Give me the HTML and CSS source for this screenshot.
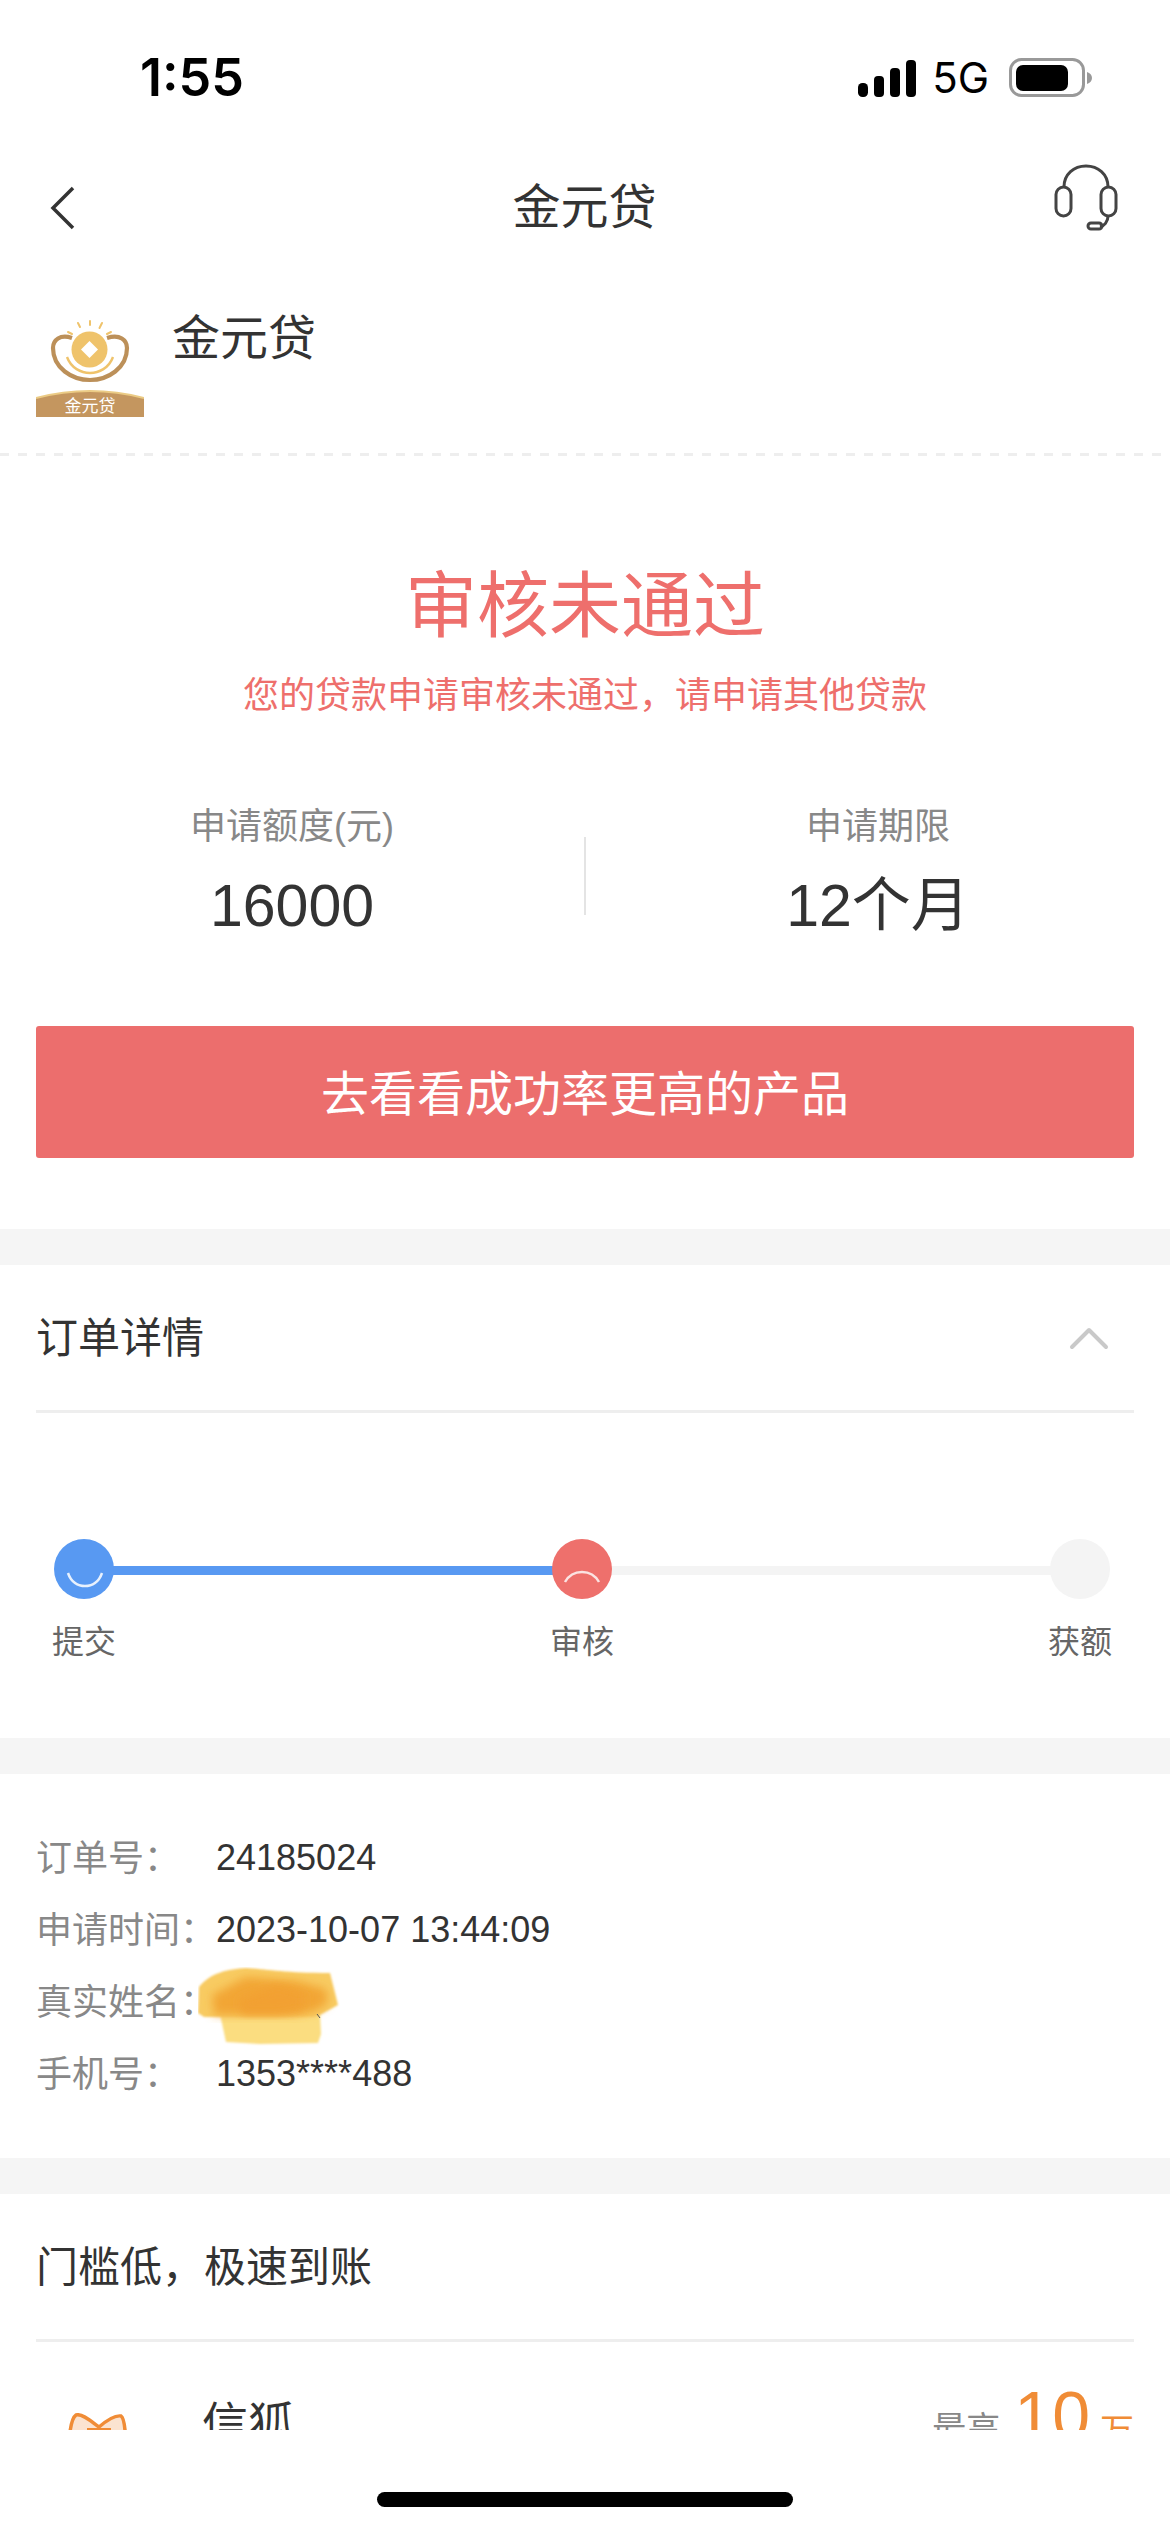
FILE: index.html
```html
<!DOCTYPE html>
<html lang="zh-CN">
<head>
<meta charset="utf-8">
<title>金元贷</title>
<link rel="stylesheet" href="styles.css">
</head>
<body>
<div class="viewport">
  <header class="statusbar">
    <span class="time">1:55</span>
    <div class="status-right">
      <svg class="signal" width="58" height="37" viewBox="0 0 58 37"><rect x="0" y="23" width="10" height="14" rx="4.5"/><rect x="16" y="16" width="10" height="21" rx="4"/><rect x="32" y="8" width="10" height="29" rx="4"/><rect x="48" y="0" width="10" height="37" rx="4"/></svg>
      <span class="net">5G</span>
      <svg class="battery" width="84" height="40" viewBox="0 0 84 40"><rect x="1.5" y="1.5" width="73" height="36" rx="11" fill="none" stroke="#999" stroke-width="3"/><rect x="7" y="7" width="52" height="26" rx="7" fill="#000"/><path d="M78 14c3 1 5 3 5 6s-2 5-5 6z" fill="#999"/></svg>
    </div>
  </header>

  <nav class="nav">
    <svg class="back" width="26" height="44" viewBox="0 0 26 44"><path d="M23 2 3 22l20 20" fill="none" stroke="#333" stroke-width="3.5"/></svg>
    <h1 class="nav-title">金元贷</h1>
    <svg class="headset" width="66" height="68" viewBox="0 0 66 68" fill="none" stroke="#444" stroke-width="3"><path d="M11 24C11 11 21 3 33 3s22 8 22 21"/><rect x="3" y="24" width="15" height="29" rx="7.5"/><rect x="48" y="24" width="15" height="29" rx="7.5"/><path d="M55 53c0 6-4 10-8 11"/><rect x="35" y="60" width="14" height="6" rx="3"/></svg>
  </nav>

  <section class="brand">
    <svg class="logo" width="108" height="108" viewBox="0 0 108 108">
      <g fill="none" stroke="#EFC36B" stroke-width="2" stroke-linecap="round"><path d="M32 22l4 2M42 13l2 4M54 11v4M66 13l-2.500 5M75 22l-4 2"/></g>
      <path d="M36 28C24 24 17 30 17 38c0 20 19 32 37 32s37-12 37-32c0-8-7-14-20-10" fill="none" stroke="#BC9059" stroke-width="4.200"/>
      <path d="M31 47c4 11 14 16 23 16s19-5 23-16" fill="none" stroke="#EFC36B" stroke-width="2.400"/>
      <circle cx="53.500" cy="39.500" r="18" fill="#EFC36B"/>
      <path d="M53.500 31l8.500 8.500-8.500 8.500-8.500-8.500z" fill="#fff"/>
      <path d="M0 88Q54 74 108 88v19H0z" fill="#C4965F"/>
      <path d="M0 88Q54 74 108 88" fill="none" stroke="#EBCB85" stroke-width="2"/>
      <text class="logo-text" x="54" y="102" text-anchor="middle">金元贷</text>
    </svg>
    <span class="brand-name">金元贷</span>
  </section>
  <div class="dashed"></div>

  <section class="hero">
    <h2 class="hero-title">审核未通过</h2>
    <p class="hero-sub">您的贷款申请审核未通过，请申请其他贷款</p>
    <div class="stats">
      <div class="stat">
        <div class="stat-label">申请额度(元)</div>
        <div class="stat-value">16000</div>
      </div>
      <div class="stat-divider"></div>
      <div class="stat">
        <div class="stat-label">申请期限</div>
        <div class="stat-value">12个月</div>
      </div>
    </div>
    <button class="cta">去看看成功率更高的产品</button>
  </section>

  <div class="band"></div>

  <section class="panel-head">
    <span>订单详情</span>
    <svg class="chev" width="40" height="24" viewBox="0 0 40 24"><path d="M3 21 20 4l17 17" fill="none" stroke="#c9c9c9" stroke-width="4" stroke-linecap="round" stroke-linejoin="round"/></svg>
  </section>

  <section class="steps">
    <div class="track"><div class="track-fill"></div></div>
    <div class="step">
      <svg class="dot" width="60" height="60" viewBox="0 0 60 60"><circle cx="30" cy="30" r="30" fill="#5899F2"/><path d="M14 34c3 9 10 13 17 13s14-4 17-13" fill="none" stroke="#E8F1FD" stroke-width="2.500"/></svg>
      <span class="step-label">提交</span>
    </div>
    <div class="step">
      <svg class="dot" width="60" height="60" viewBox="0 0 60 60"><circle cx="30" cy="30" r="30" fill="#EE706C"/><path d="M13 43c4-7 10-10 17-10s13 3 17 10" fill="none" stroke="#FBE3E2" stroke-width="2.500"/></svg>
      <span class="step-label">审核</span>
    </div>
    <div class="step">
      <svg class="dot" width="60" height="60" viewBox="0 0 60 60"><circle cx="30" cy="30" r="30" fill="#f4f4f4"/></svg>
      <span class="step-label">获额</span>
    </div>
  </section>

  <div class="band"></div>

  <section class="info">
    <div class="row"><span class="row-label">订单号：</span><span class="row-value">24185024</span></div>
    <div class="row"><span class="row-label">申请时间：</span><span class="row-value">2023-10-07 13:44:09</span></div>
    <div class="row">
      <span class="row-label">真实姓名：</span>
      <svg class="scribble" width="150" height="80" viewBox="0 0 150 80">
        <defs>
          <filter id="soft" x="-10%" y="-10%" width="120%" height="120%"><feGaussianBlur stdDeviation="1.200"/></filter>
          <filter id="softer" x="-20%" y="-20%" width="140%" height="140%"><feGaussianBlur stdDeviation="5"/></filter>
        </defs>
        <g filter="url(#soft)">
          <path d="M22 47h100l1 20-3 9-58 1-34-2z" fill="#FBDD80"/>
          <path d="M1 20C12 6 30 2 48 1c20 1 36 5 84 5l8 32-18 10-6 2H6L0 46z" fill="#F8CB62"/>
        </g>
        <path d="M14 28 48 10l50 4 30 8 2 14-12 8-20 4H16z" fill="#F2A635" filter="url(#softer)"/>
        <path d="M40 32 80 18l26 8v16l-24 5H44z" fill="#F2A030" filter="url(#softer)"/>
        <path d="M119 47l3 4" fill="none" stroke="#555" stroke-width="1"/>
      </svg>
    </div>
    <div class="row"><span class="row-label">手机号：</span><span class="row-value">1353****488</span></div>
  </section>

  <div class="band"></div>

  <section class="panel-head"><span>门槛低，极速到账</span></section>

  <section class="item">
    <svg class="fox" width="60" height="50" viewBox="0 0 60 50"><path d="M2 50C1 30 3 6 9 2c6-2 16 7 23 12 7-6 16-12 22-11 5 3 5 30 5 47z" fill="#FBE3D0" stroke="#F08C36" stroke-width="3.500"/><path d="M20 15h24v35H20z" fill="#F08C36"/></svg>
    <span class="item-name">信狐</span>
    <div class="item-amount"><span class="amt-pre">最高</span><span class="amt-num">10</span><span class="amt-unit">万</span></div>
  </section>
</div>
<div class="home"><div class="home-bar"></div></div>
</body>
</html>
```
FILE: styles.css
```css
* { box-sizing: border-box; }
html, body { margin: 0; padding: 0; background: #fff; }
body {
  width: 1170px;
  height: 2532px;
  overflow: hidden;
  font-family: "Liberation Sans", "Noto Sans CJK SC", sans-serif;
  color: #333;
}
h1, h2, p { margin: 0; font-weight: 400; }

.viewport { height: 2430px; overflow: hidden; }

/* status bar */
.statusbar {
  height: 120px;
  padding: 36px 77px 0 140px;
  display: flex;
  align-items: center;
  justify-content: space-between;
}
.time { font-family: Inter, "Liberation Sans", sans-serif; font-weight: 600; font-size: 52px; line-height: 84px; color: #000; }
.status-right { display: flex; align-items: center; }
.signal { fill: #000; margin-right: 16px; }
.net { font-family: Inter, "Liberation Sans", sans-serif; font-size: 42px; line-height: 40px; color: #000; margin-right: 20px; }

/* nav */
.nav {
  height: 172px;
  display: grid;
  grid-template-columns: 1fr auto 1fr;
  align-items: center;
  padding: 0 51px 0 50px;
}
.back { margin-top: 4px; }
.nav-title {
  font-size: 48px;
  line-height: 60px;
  margin-top: 3px;
  color: #333;
}
.headset { justify-self: end; margin-top: -18px; }

/* brand */
.brand {
  height: 161px;
  padding: 18px 36px 0;
  display: flex;
  align-items: flex-start;
  gap: 28px;
}
.logo-text { font-size: 17px; fill: #fff; }
.brand-name { font-size: 48px; line-height: 54px; margin-top: 2px; color: #333; }
.dashed {
  height: 3px;
  background: repeating-linear-gradient(90deg, #eeeeee 0 9px, transparent 9px 18px);
}

/* hero */
.hero { padding: 110px 0 71px; text-align: center; }
.hero-title { font-size: 72px; line-height: 80px; color: #EE6F6C; }
.hero-sub { font-size: 36px; line-height: 50px; color: #EE6F6C; margin-top: 25px; }
.stats { display: flex; margin-top: 81px; }
.stat { flex: 1; }
.stat-label { font-size: 36px; line-height: 50px; color: #888; }
.stat-value { font-size: 59px; line-height: 70px; color: #333; margin-top: 19px; }
.stat-divider { width: 2px; height: 78px; background: #e4e4e4; margin-top: 35px; }
.cta {
  display: block;
  width: 1098px;
  height: 132px;
  margin: 85px 36px 0;
  padding: 0 0 5px;
  border: 0;
  border-radius: 3px;
  background: #EC6E6D;
  color: #fff;
  font-family: inherit;
  font-size: 48px;
}

.band { height: 36px; background: #f5f5f5; }

/* section heading */
.panel-head {
  height: 148px;
  margin: 0 36px;
  padding-bottom: 6px;
  border-bottom: 3px solid #eeeeee;
  display: flex;
  align-items: center;
  justify-content: space-between;
  font-size: 42px;
  color: #333;
}
.chev { margin: 7px 25px 0 0; }

/* steps */
.steps {
  position: relative;
  display: flex;
  justify-content: space-between;
  padding: 126px 58px 76px 52px;
}
.track {
  position: absolute;
  top: 153px;
  left: 84px;
  width: 996px;
  height: 9px;
  background: #f4f4f4;
}
.track-fill { width: 50%; height: 100%; background: #5899F2; }
.step {
  position: relative;
  width: 64px;
  display: flex;
  flex-direction: column;
  align-items: center;
}
.dot { display: block; }
.step-label { font-size: 32px; line-height: 40px; color: #666; margin-top: 23px; white-space: nowrap; }

/* order info */
.info { padding: 48px 36px; }
.row { height: 72px; display: flex; align-items: center; position: relative; font-size: 36px; }
.row-label { width: 180px; padding-bottom: 6px; color: #888; white-space: nowrap; }
.row-value { color: #333; }
.scribble { position: absolute; left: 162px; top: 1px; }

/* product item */
.item { display: flex; align-items: flex-start; padding: 0 36px 0 67px; }
.fox { margin-top: 71px; flex: none; display: block; }
.item-name { font-size: 46px; line-height: 52px; margin: 56px 0 0 75px; color: #333; }
.item-amount { margin: 35px 0 0 auto; display: flex; align-items: flex-start; }
.amt-pre { font-size: 34px; line-height: 40px; margin-top: 32px; color: #888; }
.amt-num { font-size: 68px; line-height: 76px; color: #F08C36; margin: 0 10px 0 14px; }
.amt-unit { font-size: 34px; line-height: 40px; margin-top: 34px; color: #F08C36; }

/* home indicator */
.home { height: 102px; padding-top: 62px; }
.home-bar { width: 416px; height: 15px; margin: 0 auto; background: #000; border-radius: 8px; }
```
